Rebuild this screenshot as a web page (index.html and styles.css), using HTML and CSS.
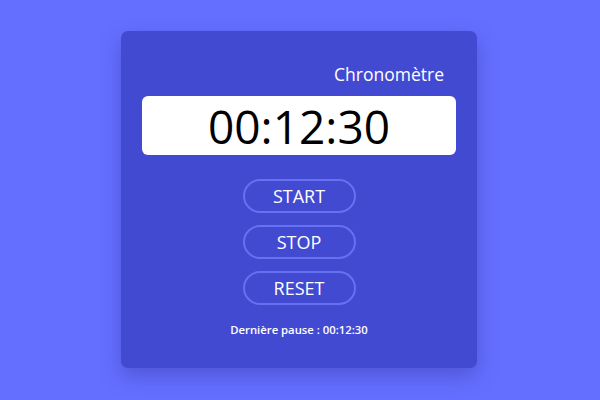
FILE: index.html
```html
<!DOCTYPE html>
<html lang="fr">
<head>
<meta charset="utf-8">
<link rel="stylesheet" href="styles.css">
</head>
<body>
<div class="page">
  <div class="card">
    <div class="title">Chronomètre</div>
    <div class="display">00:12:30</div>
    <div class="buttons">
      <button class="btn">START</button>
      <button class="btn">STOP</button>
      <button class="btn">RESET</button>
    </div>
    <div class="last">Dernière pause : 00:12:30</div>
  </div>
</div>
</body>
</html>
```
FILE: styles.css
```css
html, body {
  margin: 0;
  padding: 0;
}
body {
  background: #656fff;
  font-family: "Open Sans", sans-serif;
  width: 600px;
  height: 400px;
  overflow: hidden;
}
.page {
  display: flex;
  justify-content: center;
  padding-top: 31px;
  padding-right: 2px;
}
.card {
  width: 356px;
  height: 337px;
  box-sizing: border-box;
  background: #434ad2;
  border-radius: 7px;
  box-shadow: 0 8px 20px rgba(40, 40, 140, 0.35);
  padding: 31px 21px 0 21px;
  display: flex;
  flex-direction: column;
}
.title {
  color: #ffffff;
  font-size: 17.5px;
  font-weight: 500;
  line-height: 24px;
  text-align: right;
  padding-right: 12px;
}
.display {
  margin-top: 10px;
  background: #ffffff;
  border-radius: 6px;
  height: 59px;
  display: flex;
  align-items: center;
  justify-content: center;
  font-size: 46px;
  color: #000000;
  line-height: 1;
}
.buttons {
  margin-top: 24px;
  display: flex;
  flex-direction: column;
  align-items: center;
  gap: 12px;
}
.btn {
  width: 113px;
  height: 34px;
  box-sizing: border-box;
  border: 2px solid #6670f0;
  border-radius: 17px;
  background: transparent;
  color: #ffffff;
  font-family: "Open Sans", sans-serif;
  font-size: 18px;
  font-weight: 500;
  padding: 0;
  line-height: 1;
}
.last {
  margin-top: 17px;
  text-align: center;
  color: #ffffff;
  font-size: 11.3px;
  font-weight: 600;
  line-height: 16px;
}
```
